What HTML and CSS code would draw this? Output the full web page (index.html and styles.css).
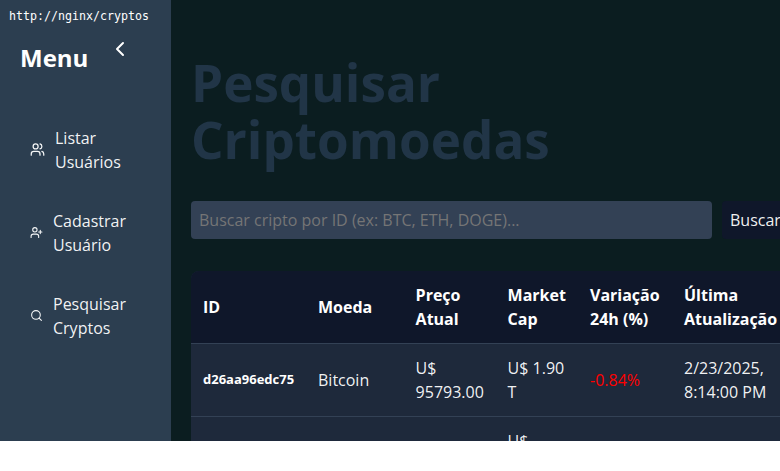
FILE: index.html
```html
<!DOCTYPE html>
<html lang="pt-BR">
<head>
<meta charset="utf-8">
<title>Pesquisar Criptomoedas</title>
<link rel="stylesheet" href="styles.css">
</head>
<body>
<div class="address">http://nginx/cryptos</div>
<div class="app">
  <aside class="sidebar">
    <header class="sidebar-header">
      <h2>Menu</h2>
      <svg class="chevron" viewBox="0 0 24 24"><path d="m15 18-6-6 6-6"/></svg>
    </header>
    <nav class="nav">
      <a class="nav-item">
        <svg class="icon icon-users" viewBox="0 0 24 24"><path d="M16 21v-2a4 4 0 0 0-4-4H6a4 4 0 0 0-4 4v2"/><circle cx="9" cy="7" r="4"/><path d="M22 21v-2a4 4 0 0 0-3-3.87"/><path d="M16 3.13a4 4 0 0 1 0 7.75"/></svg>
        <span>Listar<br>Usuários</span>
      </a>
      <a class="nav-item">
        <svg class="icon" viewBox="0 0 24 24"><path d="M16 21v-2a4 4 0 0 0-4-4H6a4 4 0 0 0-4 4v2"/><circle cx="9" cy="7" r="4"/><path d="M19 8v6M22 11h-6"/></svg>
        <span>Cadastrar<br>Usuário</span>
      </a>
      <a class="nav-item">
        <svg class="icon" viewBox="0 0 24 24"><circle cx="11" cy="11" r="8"/><path d="m21 21-4.3-4.3"/></svg>
        <span>Pesquisar<br>Cryptos</span>
      </a>
    </nav>
  </aside>
  <main class="content">
    <h1>Pesquisar<br>Criptomoedas</h1>
    <div class="search">
      <input type="text" placeholder="Buscar cripto por ID (ex: BTC, ETH, DOGE)...">
      <button type="button">Buscar</button>
    </div>
    <table class="cryptos">
      <colgroup><col class="c-id"><col class="c-name"><col class="c-price"><col class="c-cap"><col class="c-change"><col class="c-date"></colgroup>
      <thead>
        <tr><th>ID</th><th>Moeda</th><th>Preço<br>Atual</th><th>Market<br>Cap</th><th>Variação<br>24h (%)</th><th>Última<br>Atualização</th></tr>
      </thead>
      <tbody>
        <tr><td class="id">d26aa96edc75</td><td>Bitcoin</td><td>U$<br>95793.00</td><td>U$ 1.90<br>T</td><td class="down">-0.84%</td><td>2/23/2025,<br>8:14:00 PM</td></tr>
        <tr class="tall"><td></td><td></td><td></td><td class="top">U$</td><td></td><td></td></tr>
      </tbody>
    </table>
  </main>
</div>
</body>
</html>
```
FILE: styles.css
```css
* { box-sizing: border-box; }
html { background: #fff; overflow: hidden; }
body {
  margin: 0;
  overflow: hidden;
  font: 16px/24px "Open Sans", "Noto Sans", sans-serif;
  color: rgba(255, 255, 255, 0.95);
}
svg {
  fill: none;
  stroke: currentColor;
  stroke-width: 2;
  stroke-linecap: round;
  stroke-linejoin: round;
  flex: none;
}
.address {
  position: absolute;
  left: 9px;
  top: 8px;
  font: 11.63px/16px "DejaVu Sans Mono", monospace;
  color: #fff;
}
.app { display: flex; width: 780px; height: 441px; overflow: hidden; background: #0b1d20; }
.sidebar { flex: none; width: 171px; padding: 37px 20px 0; background: #2c3e50; }
.sidebar-header { display: flex; gap: 20px; color: #fff; }
.sidebar-header h2 { margin: 3px 0 1px; font-size: 24px; line-height: 36px; }
.chevron { width: 24px; height: 24px; }
.nav { display: flex; flex-direction: column; gap: 35px; margin-top: 49px; padding-left: 10px; }
.nav-item { display: flex; align-items: center; gap: 10px; }
.icon { width: 13px; height: 13px; margin-bottom: 1px; }
.icon-users { width: 15px; height: 15px; }
.content { flex: none; width: 618px; padding: 54px 0 0 20px; }
h1 { margin: 0; font-size: 51.2px; line-height: 57px; color: #213547; }
.search { display: flex; gap: 10px; margin-top: 33px; }
.search input {
  width: 521px;
  height: 38px;
  padding: 0 8px;
  border: 0;
  border-radius: 4px;
  background: #334155;
  font: inherit;
}
.search input::placeholder { color: #757575; }
.search button {
  height: 38px;
  padding: 0 8px;
  border: 0;
  border-radius: 4px;
  background: #0f172a;
  color: inherit;
  font: inherit;
}
.cryptos {
  width: 598px;
  margin-top: 32px;
  table-layout: fixed;
  border-collapse: separate;
  border-spacing: 0;
  border-radius: 8px;
  overflow: hidden;
  background: #1e293b;
}
.c-id { width: 115px; }
.c-name { width: 97.6px; }
.c-price { width: 92px; }
.c-cap { width: 82.4px; }
.c-change { width: 94px; }
.c-date { width: 117px; }
.cryptos th, .cryptos td { padding: 12px; border-bottom: 1px solid #334155; text-align: left; white-space: nowrap; }
.cryptos th { background: #0f172a; color: #fff; }
.cryptos .id { padding-bottom: 14px; font-size: 13px; font-weight: 700; color: #fff; }
.cryptos .down { color: #f00; }
.tall { height: 97px; }
.cryptos .top { vertical-align: top; }
```
